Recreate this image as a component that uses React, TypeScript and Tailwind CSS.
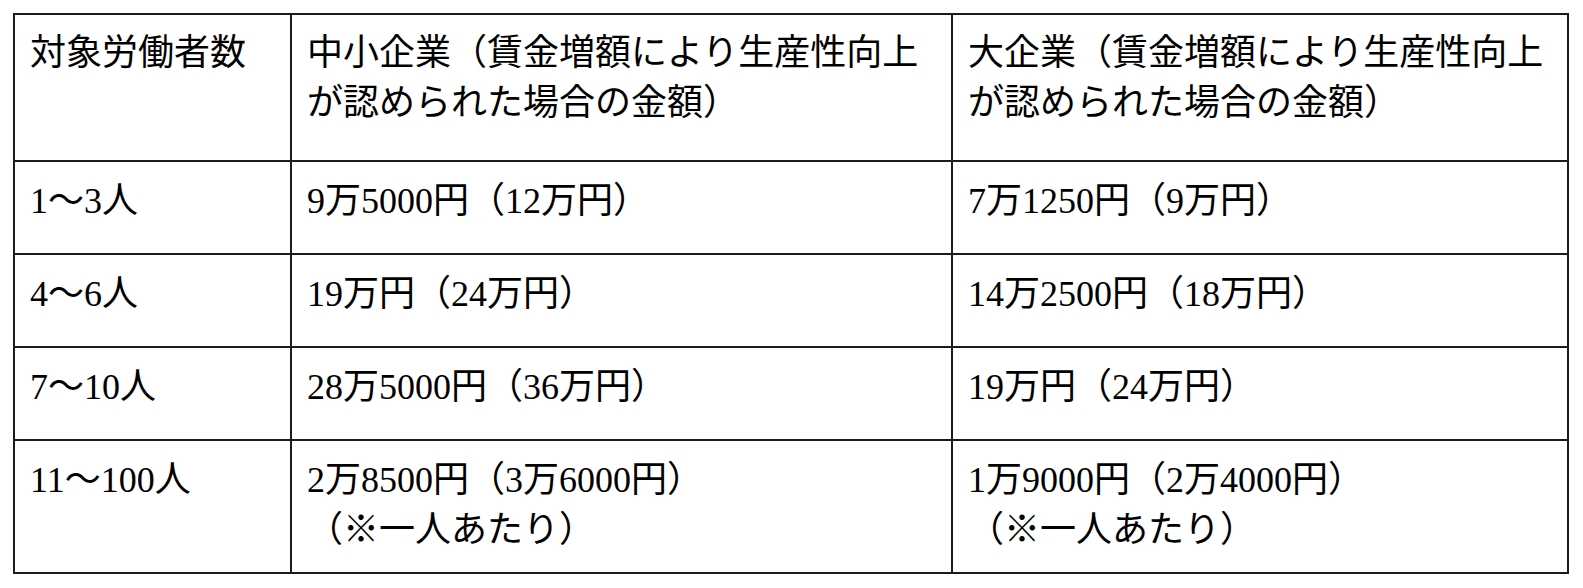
const sans = "font-['Noto_Sans_CJK_JP','Noto_Sans',sans-serif]";
const serif = "font-['Liberation_Serif','Noto_Sans_CJK_JP',serif]";

const rows: { count: string; sme: string[]; large: string[]; tall?: boolean }[] = [
  { count: '1〜3人', sme: ['9万5000円（12万円）'], large: ['7万1250円（9万円）'] },
  { count: '4〜6人', sme: ['19万円（24万円）'], large: ['14万2500円（18万円）'] },
  { count: '7〜10人', sme: ['28万5000円（36万円）'], large: ['19万円（24万円）'] },
  {
    count: '11〜100人',
    sme: ['2万8500円（3万6000円）', '（※一人あたり）'],
    large: ['1万9000円（2万4000円）', '（※一人あたり）'],
    tall: true,
  },
];

const cell = 'border-r-2 border-b-2 border-[#1c1c1c] pl-[15px] text-[36px] leading-[50px] text-black';

export default function App() {
  return (
    <div className="bg-white min-h-[588px] w-[1583px] pt-[13px] pl-[13px]">
      <div className="grid w-[1556px] grid-cols-[277px_661px_616px] border-l-2 border-t-2 border-[#1c1c1c]">
        <div className={`${cell} ${sans} h-[147px] pt-[9px]`}>対象労働者数</div>
        <div className={`${cell} ${sans} h-[147px] pt-[9px]`}>
          中小企業（賃金増額により生産性向上
          <br />
          が認められた場合の金額）
        </div>
        <div className={`${cell} ${sans} h-[147px] pt-[9px]`}>
          大企業（賃金増額により生産性向上
          <br />
          が認められた場合の金額）
        </div>

        {rows.map((r) => {
          const h = r.tall ? 'h-[133px]' : 'h-[93px]';
          return (
            <div key={r.count} className="contents">
              <div className={`${cell} ${serif} ${h} pt-[14px]`}>{r.count}</div>
              <div className={`${cell} ${serif} ${h} pt-[14px]`}>
                {r.sme.map((line, i) => (
                  <div key={i}>{line}</div>
                ))}
              </div>
              <div className={`${cell} ${serif} ${h} pt-[14px]`}>
                {r.large.map((line, i) => (
                  <div key={i}>{line}</div>
                ))}
              </div>
            </div>
          );
        })}
      </div>
    </div>
  );
}
